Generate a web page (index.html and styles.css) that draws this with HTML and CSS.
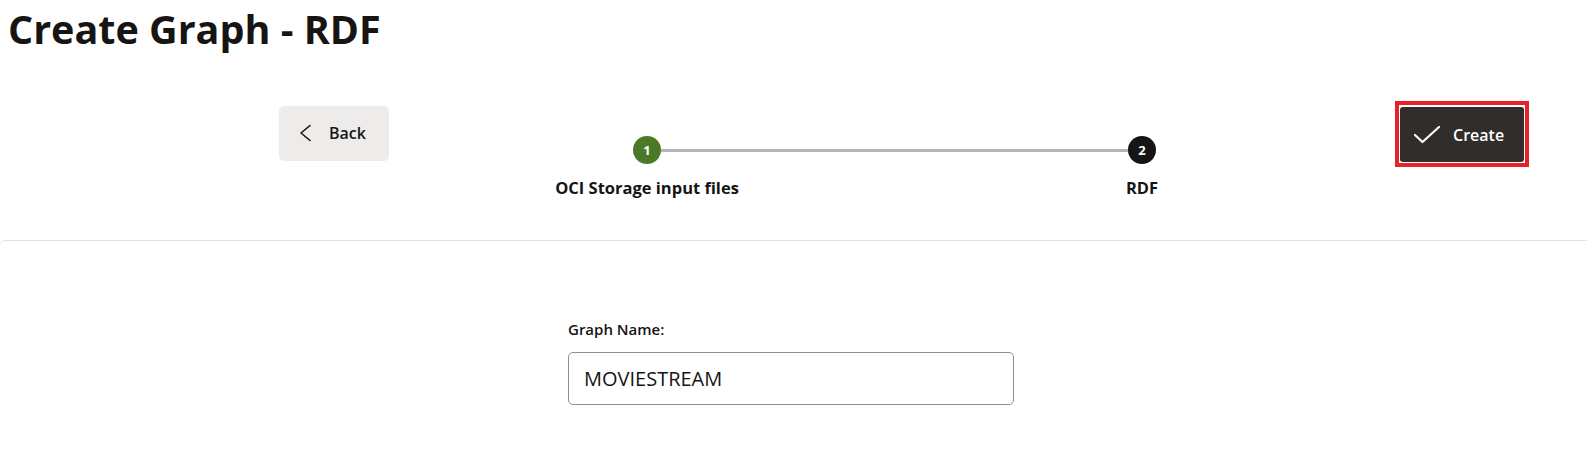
FILE: index.html
```html
<!DOCTYPE html>
<html lang="en">
<head>
<meta charset="utf-8">
<title>Create Graph - RDF</title>
<link rel="stylesheet" href="styles.css">
</head>
<body>
<div class="page">
  <h1 class="title">Create Graph - RDF</h1>
  <div class="toolbar">
    <button class="btn btn-back" type="button">
      <svg class="chev" width="14" height="18" viewBox="0 0 14 18" aria-hidden="true"><path d="M12 1.5 L3 9 L12 16.5" fill="none" stroke="#161513" stroke-width="1.6" stroke-linecap="round" stroke-linejoin="round"/></svg>
      <span>Back</span>
    </button>
    <div class="stepper">
      <div class="dot dot-done">1</div>
      <div class="track"></div>
      <div class="dot dot-current">2</div>
      <div class="label label-1">OCI Storage input files</div>
      <div class="label label-2">RDF</div>
    </div>
    <div class="highlight">
      <button class="btn btn-create" type="button">
        <svg class="check" width="28" height="20" viewBox="0 0 28 20" aria-hidden="true"><path d="M2 10 L9.5 17 L26 2" fill="none" stroke="#ffffff" stroke-width="2.2" stroke-linecap="round" stroke-linejoin="round"/></svg>
        <span>Create</span>
      </button>
    </div>
  </div>
  <div class="card">
    <div class="form">
      <label class="field-label" for="gname">Graph Name:</label>
      <div class="input">MOVIESTREAM</div>
    </div>
  </div>
</div>
</body>
</html>
```

FILE: styles.css
```css
html, body {
  margin: 0;
  padding: 0;
  overflow: hidden;
  background: #ffffff;
}
body {
  font-family: "Open Sans", "Noto Sans", sans-serif;
  color: #161513;
}
.page {
  width: 1587px;
}
.title {
  margin: 2px 0 0 8px;
  font-size: 39.5px;
  font-weight: 700;
  line-height: 54px;
  color: #161513;
}
.toolbar {
  display: flex;
  align-items: flex-start;
  margin-top: 50px;
  padding-left: 279px;
  height: 134px;
}
.btn {
  flex: none;
  display: flex;
  align-items: center;
  border: 0;
  border-radius: 5px;
  font-family: inherit;
  font-size: 16px;
  font-weight: 600;
  cursor: pointer;
  height: 55px;
}
.btn-back {
  width: 110px;
  background: #edeceb;
  color: #161513;
  padding: 0 0 2px 19px;
  gap: 17px;
}
.highlight {
  flex: none;
  margin: -5px 0 0 -5px;
  border: 4px solid #e8202a;
  padding: 2px 1px 1px 1px;
}
.btn-create {
  width: 124px;
  background: #312d2a;
  color: #ffffff;
  padding: 0 0 0 13px;
  gap: 12px;
  border-radius: 3px;
}
.stepper {
  flex: none;
  width: 1011px;
  box-sizing: border-box;
  display: grid;
  grid-template-columns: 28px minmax(0, 1fr) 28px;
  grid-template-rows: 28px auto;
  align-items: center;
  padding: 30px 244px 0 244px;
}
.dot {
  width: 28px;
  height: 28px;
  border-radius: 50%;
  display: flex;
  align-items: center;
  justify-content: center;
  color: #ffffff;
  font-size: 13px;
  font-weight: 700;
}
.dot-done { background: #4b7a26; }
.dot-current { background: #161513; }
.track {
  height: 3px;
  background: #b5b5b5;
}
.label {
  grid-row: 2;
  justify-self: center;
  white-space: nowrap;
  font-size: 16.5px;
  font-weight: 700;
  margin-top: 12px;
  color: #161513;
}
.label-1 { grid-column: 1; }
.label-2 { grid-column: 3; }
.card {
  width: 1620px;
  height: 230px;
  margin-left: -1px;
  border: 1px solid #e3e3e3;
  border-radius: 6px;
  box-sizing: border-box;
}
.form {
  margin-left: 568px;
  padding-top: 77px;
  width: 446px;
}
.field-label {
  display: block;
  font-size: 15px;
  font-weight: 600;
  line-height: 22px;
  color: #161513;
}
.input {
  margin-top: 12px;
  height: 53px;
  box-sizing: border-box;
  border: 1px solid #8f8f8f;
  border-radius: 5px;
  padding: 0 15px;
  display: flex;
  align-items: center;
  font-size: 20px;
  color: #161513;
}
```
